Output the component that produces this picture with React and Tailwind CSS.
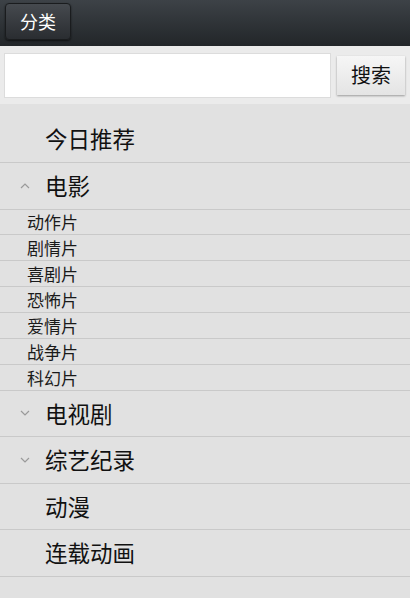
import { useState } from 'react'

const FONT = { fontFamily: '"Noto Sans CJK SC", "Noto Sans", sans-serif' }

const movies = ['动作片', '剧情片', '喜剧片', '恐怖片', '爱情片', '战争片', '科幻片']

function Chevron({ up }) {
  return (
    <svg width="10" height="6" viewBox="0 0 10 6" className="shrink-0">
      <polyline
        points={up ? '1,5 5,1 9,5' : '1,1 5,5 9,1'}
        fill="none"
        stroke="#9a9a9a"
        strokeWidth="1.2"
      />
    </svg>
  )
}

function Row({ label, chevron, open }) {
  return (
    <div className="h-[45.5px] box-content border-b border-[#c9c9c9] flex items-center">
      <div className="w-[45px] flex justify-center pl-[4px]">
        {chevron && <Chevron up={open} />}
      </div>
      <span className="text-[22.5px] text-[#111]">{label}</span>
    </div>
  )
}

export default function App() {
  const [query, setQuery] = useState('')

  return (
    <div className="w-[410px] h-[598px] bg-[#e1e1e1] flex flex-col overflow-hidden" style={FONT}>
      <div className="h-[46px] shrink-0 bg-gradient-to-b from-[#3d4247] to-[#222629] flex items-start px-[5px] pt-[3px]">
        <button className="w-[66px] h-[37px] rounded-[4px] border border-[#1a1c1e] bg-gradient-to-b from-[#464a4f] to-[#2a2d31] shadow-[0_1px_2px_rgba(0,0,0,0.6)] text-white text-[18px]">
          分类
        </button>
      </div>

      <div className="h-[58px] shrink-0 bg-[#ebebeb] flex items-center px-[4px] gap-[6px]">
        <input
          value={query}
          onChange={e => setQuery(e.target.value)}
          className="w-[327px] h-[45px] bg-white border border-[#dcdcdc] outline-none px-2 text-base"
        />
        <button className="w-[68px] h-[39px] bg-gradient-to-b from-[#f6f6f6] to-[#e4e4e4] shadow-[0_1px_2px_rgba(0,0,0,0.35)] text-[20px] text-[#111]">
          搜索
        </button>
      </div>

      <div className="pt-[12.5px]">
        <Row label="今日推荐" />
        <Row label="电影" chevron open />
        {movies.map(m => (
          <div key={m} className="h-[24.9px] box-content border-b border-[#c9c9c9] flex items-center pl-[27px]">
            <span className="text-[17px] text-[#1a1a1a] leading-none">{m}</span>
          </div>
        ))}
        <Row label="电视剧" chevron />
        <Row label="综艺纪录" chevron />
        <Row label="动漫" />
        <Row label="连载动画" />
      </div>
    </div>
  )
}
